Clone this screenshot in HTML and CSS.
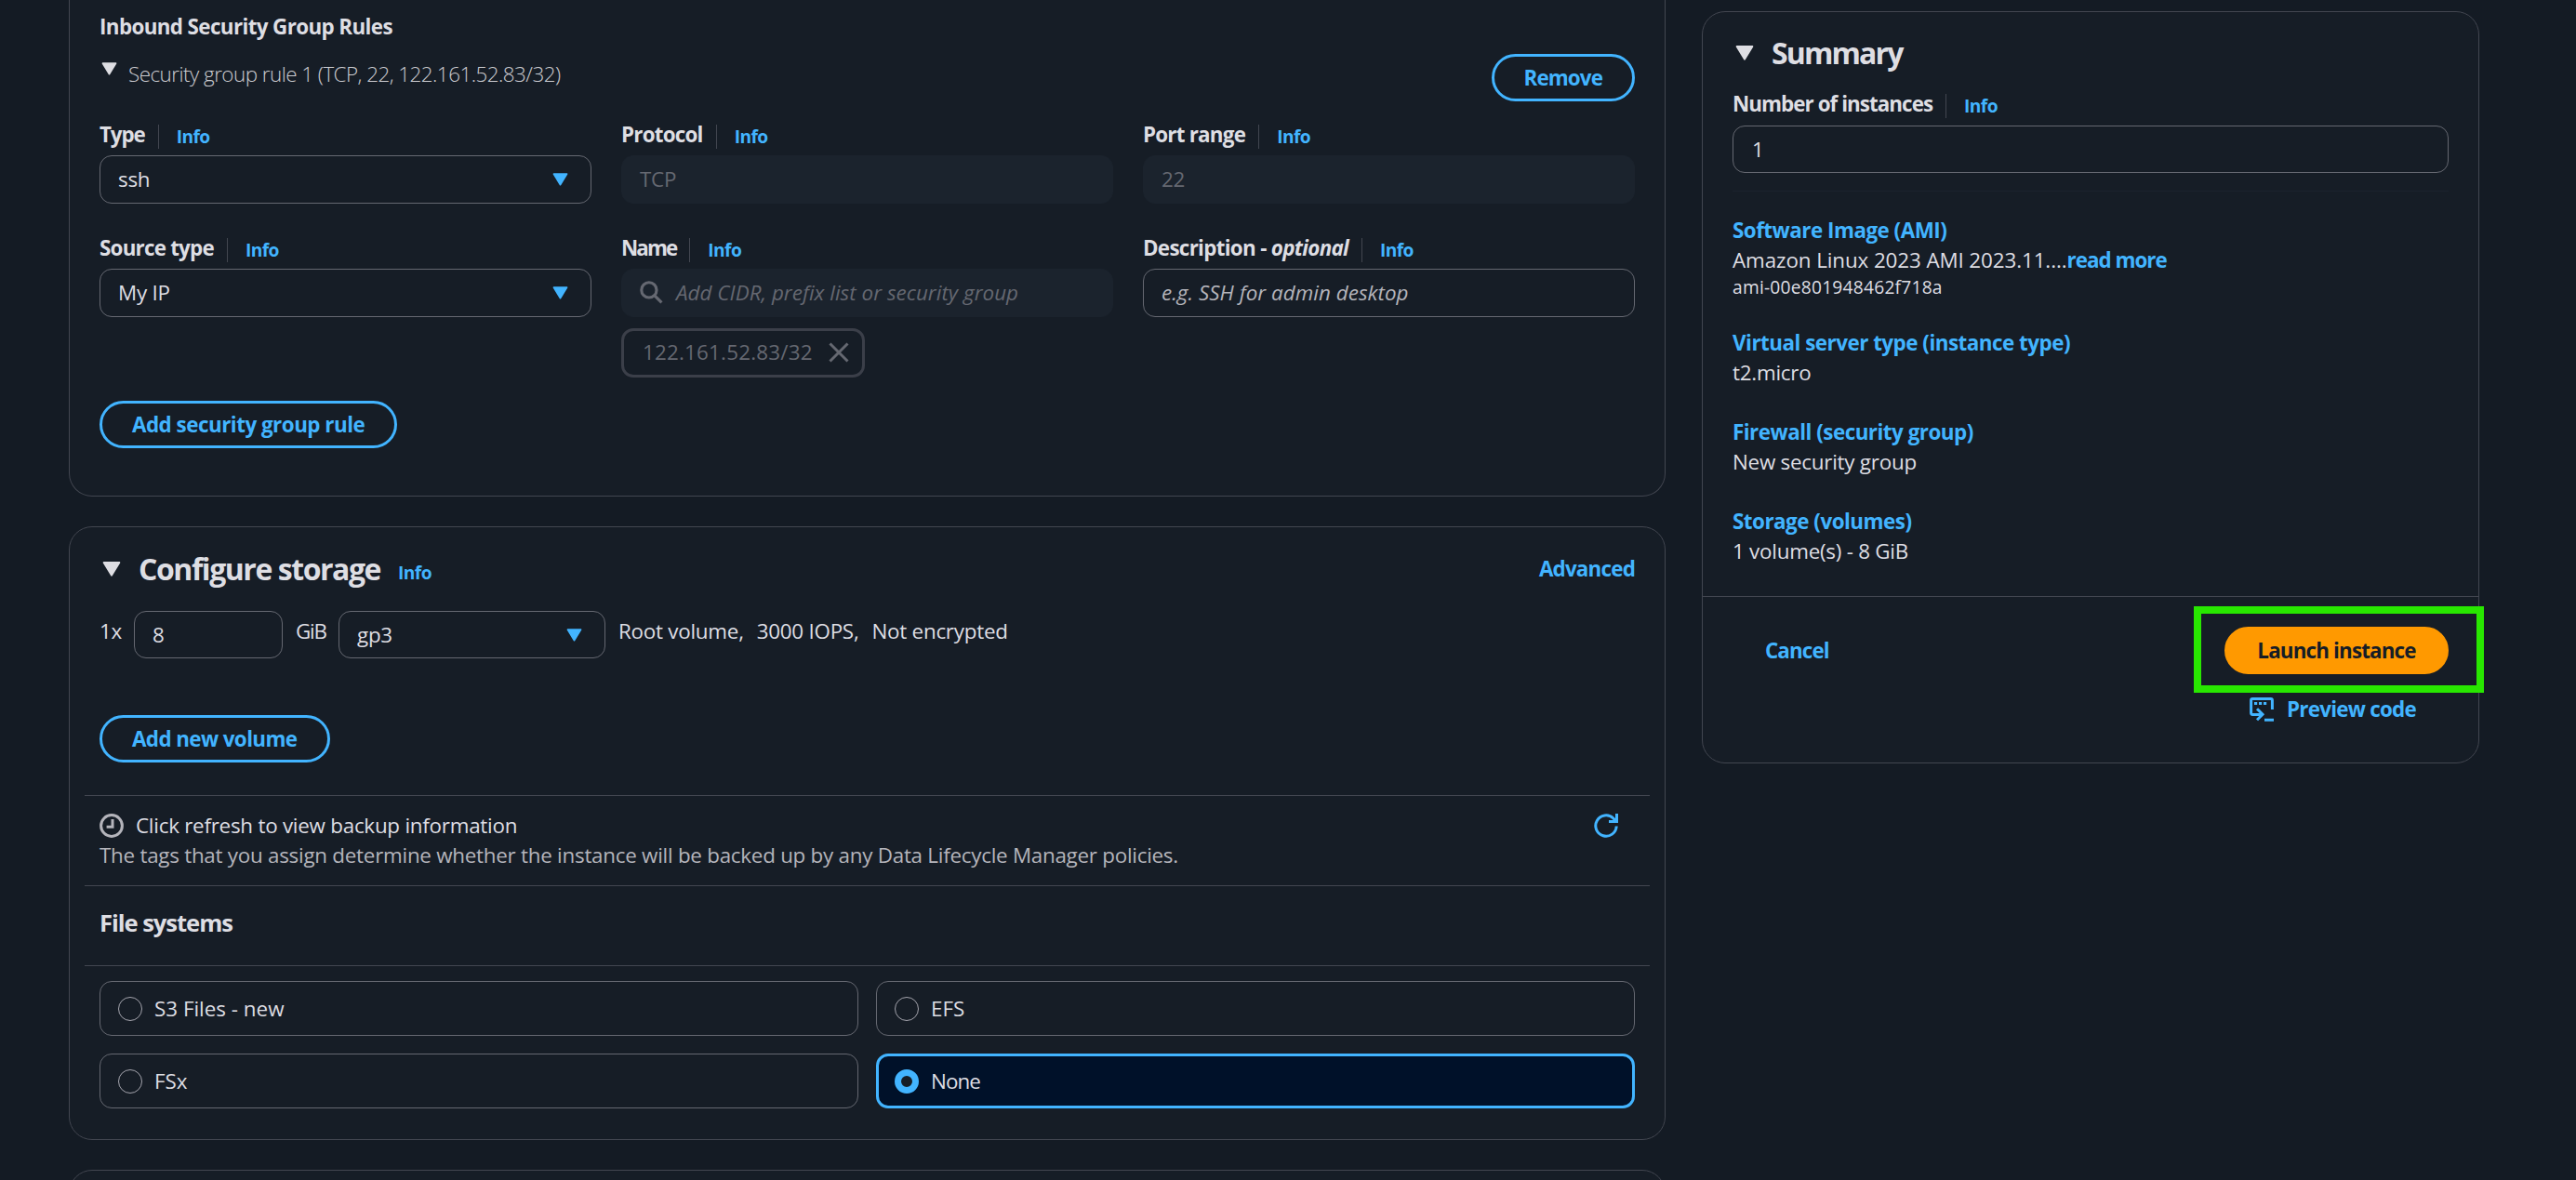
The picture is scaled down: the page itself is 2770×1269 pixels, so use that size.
FILE: index.html
```html
<!DOCTYPE html>
<html lang="en">
<head>
    <meta charset="UTF-8">
    <meta name="viewport" content="width=device-width, initial-scale=1.0">
    <title>Launch an instance</title>
    <link rel="stylesheet" href="styles.css">
</head>
<body>
    <svg class="defs" aria-hidden="true">
        <symbol id="caret" viewBox="0 0 20 16"><path d="M1.6 1h16.8L10 14.8z" stroke-width="1.8" stroke-linejoin="round"/></symbol>
    </svg>
    <div class="page">
        <main class="content">
            <section class="card security">
                <h3 class="section-title">Inbound Security Group Rules</h3>
                <div class="rule-header">
                    <svg class="caret caret-rule"><use href="#caret"/></svg>
                    <span class="rule-name">Security group rule 1 (TCP, 22, 122.161.52.83/32)</span>
                    <button class="btn btn-remove">Remove</button>
                </div>
                <div class="fields">
                    <div class="field">
                        <div class="label"><b class="label-text tight">Type</b><a class="info">Info</a></div>
                        <div class="control">ssh<svg class="caret caret-select"><use href="#caret"/></svg></div>
                    </div>
                    <div class="field">
                        <div class="label"><b class="label-text">Protocol</b><a class="info">Info</a></div>
                        <div class="control disabled">TCP</div>
                    </div>
                    <div class="field">
                        <div class="label"><b class="label-text">Port range</b><a class="info">Info</a></div>
                        <div class="control disabled">22</div>
                    </div>
                    <div class="field">
                        <div class="label"><b class="label-text">Source type</b><a class="info">Info</a></div>
                        <div class="control">My IP<svg class="caret caret-select"><use href="#caret"/></svg></div>
                    </div>
                    <div class="field">
                        <div class="label"><b class="label-text tighter">Name</b><a class="info">Info</a></div>
                        <div class="control disabled search">
                            <svg class="icon-search" viewBox="0 0 24 24"><circle cx="9.5" cy="9.5" r="7.8"/><path d="M15 15l7.5 7.5"/></svg>
                            <i class="placeholder">Add CIDR, prefix list or security group</i>
                        </div>
                        <div class="token">
                            <span class="token-text">122.161.52.83/32</span>
                            <svg class="icon-close" viewBox="0 0 22 22"><path d="M1.5 1.5l19 19M20.5 1.5l-19 19"/></svg>
                        </div>
                    </div>
                    <div class="field">
                        <div class="label"><b class="label-text wide">Description - <i>optional</i></b><a class="info">Info</a></div>
                        <div class="control"><i class="placeholder hint">e.g. SSH for admin desktop</i></div>
                    </div>
                </div>
                <button class="btn">Add security group rule</button>
            </section>

            <section class="card storage">
                <div class="card-header">
                    <svg class="caret"><use href="#caret"/></svg>
                    <h2 class="title title-storage">Configure storage</h2>
                    <a class="info-plain">Info</a>
                    <a class="link advanced">Advanced</a>
                </div>
                <div class="volume">
                    <span class="volume-count">1x</span>
                    <div class="control size">8</div>
                    <span class="volume-unit">GiB</span>
                    <div class="control kind">gp3<svg class="caret caret-select"><use href="#caret"/></svg></div>
                    <span class="volume-note">Root volume,</span>
                    <span class="volume-note">3000 IOPS,</span>
                    <span class="volume-note">Not encrypted</span>
                </div>
                <button class="btn btn-volume">Add new volume</button>
                <div class="backup">
                    <div class="backup-title">
                        <svg class="icon-clock" viewBox="0 0 26 26"><circle cx="13" cy="13" r="11.4"/><path d="M14 6v8.2H7.6"/></svg>
                        <span>Click refresh to view backup information</span>
                        <svg class="icon-refresh" viewBox="0 0 26 26"><path d="M24.2 13.5A11.2 11.2 0 1 1 20.8 5l3.2 3.4"/><path d="M24.5 0v8.6H16"/></svg>
                    </div>
                    <p class="backup-text">The tags that you assign determine whether the instance will be backed up by any Data Lifecycle Manager policies.</p>
                </div>
                <h3 class="filesystems-title">File systems</h3>
                <div class="tiles">
                    <div class="tile"><span class="radio"></span>S3 Files - new</div>
                    <div class="tile"><span class="radio"></span>EFS</div>
                    <div class="tile"><span class="radio"></span>FSx</div>
                    <div class="tile selected"><span class="radio checked"></span>None</div>
                </div>
            </section>

            <section class="card next"></section>
        </main>

        <aside class="card summary">
            <div class="summary-body">
                <div class="card-header">
                    <svg class="caret"><use href="#caret"/></svg>
                    <h2 class="title title-summary">Summary</h2>
                </div>
                <div class="label"><b class="label-text">Number of instances</b><a class="info">Info</a></div>
                <div class="control">1</div>
                <div class="items">
                    <div class="item">
                        <a class="link">Software Image (AMI)</a>
                        <div class="image-name">Amazon Linux 2023 AMI 2023.11....<a class="link read-more">read more</a></div>
                        <div class="ami">ami-00e801948462f718a</div>
                    </div>
                    <div class="item">
                        <a class="link">Virtual server type (instance type)</a>
                        <div>t2.micro</div>
                    </div>
                    <div class="item">
                        <a class="link">Firewall (security group)</a>
                        <div>New security group</div>
                    </div>
                    <div class="item">
                        <a class="link">Storage (volumes)</a>
                        <div>1 volume(s) - 8 GiB</div>
                    </div>
                </div>
            </div>
            <div class="summary-footer">
                <a class="link cancel">Cancel</a>
                <div class="actions">
                    <div class="launch">
                        <button class="btn btn-primary">Launch instance</button>
                        <div class="highlight"></div>
                    </div>
                    <a class="link preview">
                        <svg class="icon-code" viewBox="0 0 26 26"><path d="M24.4 13V3.2q0-1.6-1.6-1.6H3.2q-1.6 0-1.6 1.6v13.6q0 1.6 1.6 1.6h11M8 12.2l6 6-6 6M16 24.3h10"/><path d="M5 6.5h3.2M10 6.5h3.2M15 6.5h3.2"/></svg>
                        <span>Preview code</span>
                    </a>
                </div>
            </div>
        </aside>
    </div>
</body>
</html>
```
FILE: styles.css
```css
* {
    box-sizing: border-box;
}
body {
    margin: 0;
    height: 1269px;
    overflow: hidden;
    background-color: #141b24;
    color: #dedee3;
    font-family: "Open Sans", "Noto Sans", sans-serif;
    font-size: 22.4px;
    line-height: 32px;
    letter-spacing: -0.25px;
}
h2, h3, p {
    margin: 0;
}
svg {
    flex: none;
}
.defs {
    position: absolute;
    width: 0;
    height: 0;
}
.page {
    display: flex;
    align-items: flex-start;
    gap: 39px;
    padding-left: 74px;
}
.content {
    display: flex;
    flex-direction: column;
    gap: 32px;
    width: 1717px;
    height: 1269px;
    overflow: hidden;
}
.card {
    flex: none;
    background-color: #161d26;
    border: 1px solid #424650;
    border-radius: 25px;
    padding: 0 32px;
}

/* shared controls */
.caret {
    width: 20px;
    height: 16px;
    fill: #dedee3;
    stroke: #dedee3;
}
.caret-rule {
    width: 17px;
    height: 14px;
    margin: 9px 12px 0 2px;
}
.caret-select {
    width: 17px;
    height: 14px;
    margin-left: auto;
    fill: #42b4ff;
    stroke: #42b4ff;
}
.btn {
    height: 51px;
    padding: 1px 32px 0;
    background: none;
    border: 3px solid #42b4ff;
    border-radius: 26px;
    color: #42b4ff;
    font: bold 22.4px/44px "Open Sans", "Noto Sans", sans-serif;
    letter-spacing: -0.5px;
    white-space: nowrap;
}
.link {
    color: #42b4ff;
    font-weight: bold;
    letter-spacing: -0.5px;
}
.label {
    display: flex;
    align-items: flex-end;
    height: 32px;
    margin-bottom: 7px;
}
.label-text {
    height: 31px;
    letter-spacing: -0.78px;
    white-space: nowrap;
}
.tight {
    letter-spacing: -1.1px;
}
.tighter {
    letter-spacing: -1.9px;
}
.wide {
    letter-spacing: -0.7px;
}
.info {
    height: 26px;
    margin-left: 14px;
    padding-left: 19px;
    border-left: 1px solid #424650;
    color: #42b4ff;
    font-size: 19.2px;
    font-weight: bold;
    line-height: 25px;
    letter-spacing: -0.6px;
}
.control {
    display: flex;
    align-items: center;
    height: 52px;
    padding: 0 24px 1px 19px;
    border: 1px solid #656871;
    border-radius: 13px;
}
.control.disabled {
    background-color: #1b232d;
    border-color: #1b232d;
    color: #656871;
}
.placeholder {
    letter-spacing: 0.03px;
}
.hint {
    color: #b4b4bb;
}

/* inbound rules */
.security {
    height: 534px;
    padding-top: 13px;
    border-top: none;
    border-radius: 0 0 25px 25px;
}
.section-title {
    font-size: 22.4px;
    letter-spacing: -0.62px;
}
.rule-header {
    display: flex;
    align-items: flex-start;
    margin: 13px 0 19px;
}
.rule-name {
    padding-top: 6px;
    color: #ccccd1;
    font-weight: 300;
    letter-spacing: -0.52px;
}
.btn-remove {
    margin-left: auto;
    letter-spacing: -0.9px;
}
.fields {
    display: grid;
    grid-template-columns: repeat(3, 1fr);
    gap: 31px 32px;
    margin-bottom: 25px;
}
.search {
    gap: 14px;
}
.icon-search {
    width: 25px;
    height: 25px;
    fill: none;
    stroke: #656871;
    stroke-width: 3;
}
.token {
    display: flex;
    align-items: center;
    gap: 17px;
    width: 262px;
    height: 53px;
    margin-top: 12px;
    padding: 0 0 2px 20px;
    border: 3px solid #3b3f49;
    border-radius: 13px;
    color: #656871;
}
.token-text {
    letter-spacing: 0.2px;
}
.icon-close {
    width: 22px;
    height: 22px;
    fill: none;
    stroke: #656871;
    stroke-width: 3;
}

/* storage */
.storage {
    height: 660px;
    padding-top: 25px;
}
.card-header {
    display: flex;
    align-items: center;
    height: 40px;
    padding-left: 3px;
}
.title {
    margin-left: 19px;
    font-size: 32px;
    line-height: 40px;
}
.title-storage {
    letter-spacing: -1.45px;
}
.title-summary {
    letter-spacing: -1.85px;
}
.info-plain {
    margin: 8px 0 0 19px;
    color: #42b4ff;
    font-size: 19.2px;
    font-weight: bold;
    letter-spacing: -0.6px;
}
.advanced {
    margin-left: auto;
    letter-spacing: -0.8px;
}
.volume {
    display: flex;
    gap: 14px;
    margin-top: 25px;
}
.volume > span {
    padding-top: 6px;
}
.volume .control {
    height: 51px;
    padding-bottom: 0;
}
.volume-count {
    width: 23px;
}
.volume-unit {
    width: 32px;
    letter-spacing: -1.2px;
}
.size {
    width: 160px;
}
.kind {
    width: 287px;
}
.btn-volume {
    display: block;
    margin-top: 61px;
    letter-spacing: -0.6px;
}
.backup {
    height: 98px;
    margin: 35px -16px 0;
    padding: 16px 16px 0;
    border-top: 1px solid #424650;
    border-bottom: 1px solid #424650;
}
.backup-title {
    display: flex;
    align-items: center;
    gap: 13px;
}
.icon-clock {
    width: 26px;
    height: 26px;
    fill: none;
    stroke: #b4b4bb;
    stroke-width: 3;
}
.icon-refresh {
    width: 26px;
    height: 26px;
    margin: 0 18px 0 auto;
    fill: none;
    stroke: #42b4ff;
    stroke-width: 3;
}
.backup-text {
    color: #b4b4bb;
    letter-spacing: -0.26px;
}
.filesystems-title {
    height: 86px;
    margin: 0 -16px 16px;
    padding: 24px 16px;
    border-bottom: 1px solid #424650;
    font-size: 25.6px;
    letter-spacing: -1.05px;
}
.tiles {
    display: grid;
    grid-template-columns: 1fr 1fr;
    grid-auto-rows: 59px;
    gap: 19px;
}
.tile {
    display: flex;
    align-items: center;
    gap: 13px;
    padding: 0 19px;
    border: 1px solid #656871;
    border-radius: 13px;
    letter-spacing: 0;
}
.tile.selected {
    padding: 0 17px;
    border: 3px solid #42b4ff;
    background-color: #001129;
    letter-spacing: -0.9px;
}
.radio {
    width: 26px;
    height: 26px;
    border: 1px solid #a4a4ad;
    border-radius: 50%;
}
.radio.checked {
    border: 7px solid #42b4ff;
    background-color: #161d26;
}
.next {
    height: 60px;
}

/* summary */
.summary {
    width: 836px;
    height: 809px;
    margin-top: 12px;
    padding: 0;
}
.summary-body {
    height: 629px;
    padding: 24px 32px 0;
    border-bottom: 1px solid #424650;
}
.summary .label {
    margin: 18px 0 8px;
}
.summary .label-text {
    letter-spacing: -0.95px;
}
.summary .control {
    height: 51px;
    padding: 0 20px;
}
.items {
    display: flex;
    flex-direction: column;
    gap: 32px;
    margin-top: 19px;
    padding-top: 26px;
    border-top: 1px solid #1b232d;
}
.image-name {
    letter-spacing: -0.1px;
}
.read-more {
    letter-spacing: -1px;
}
.ami {
    font-size: 19.2px;
    line-height: 25px;
    letter-spacing: 0.23px;
}
.summary-footer {
    display: flex;
    justify-content: space-between;
    align-items: flex-start;
    padding: 32px 32px 0 67px;
}
.cancel {
    padding-top: 10px;
    letter-spacing: -0.9px;
}
.actions {
    display: flex;
    flex-direction: column;
    align-items: flex-end;
    gap: 12px;
}
.launch {
    position: relative;
}
.btn-primary {
    display: block;
    width: 241px;
    background-color: #ff9900;
    border-color: #ff9900;
    color: #161d26;
    letter-spacing: -0.85px;
}
.highlight {
    position: absolute;
    top: -22px;
    right: -38px;
    bottom: -20px;
    left: -33px;
    border: 8px solid #28e700;
}
.preview {
    display: flex;
    align-items: center;
    gap: 14px;
    height: 51px;
    padding-right: 35px;
    letter-spacing: -0.75px;
}
.icon-code {
    width: 26px;
    height: 26px;
    fill: none;
    stroke: #42b4ff;
    stroke-width: 3;
}
```
